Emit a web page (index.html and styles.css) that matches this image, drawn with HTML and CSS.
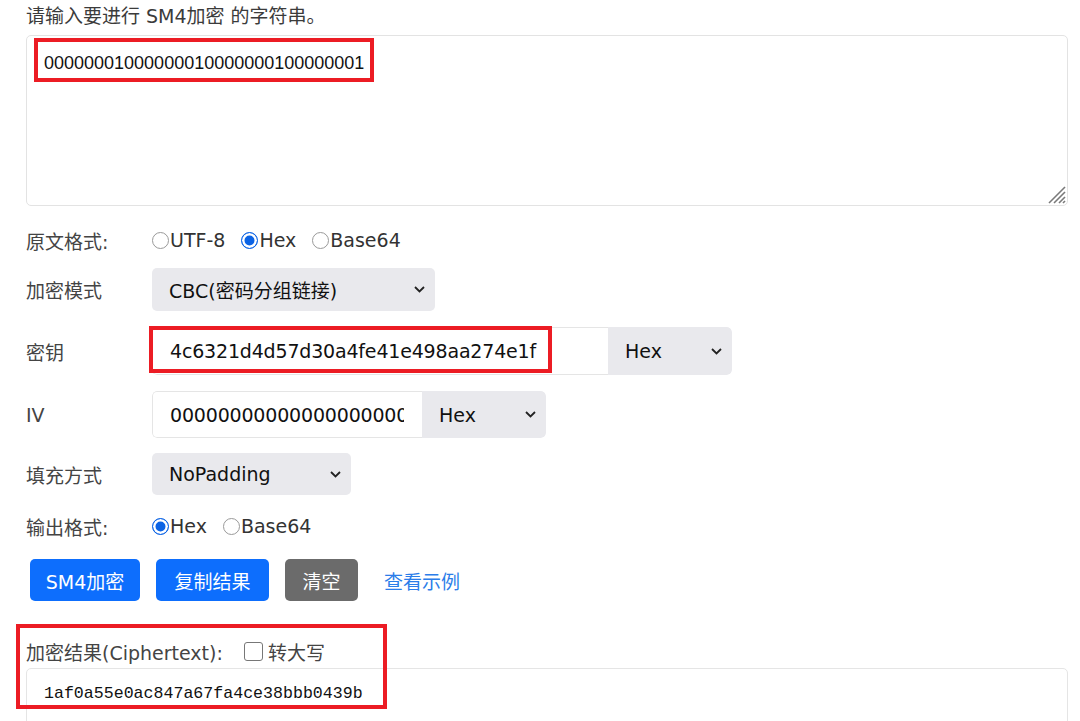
FILE: index.html
```html
<!DOCTYPE html>
<html lang="zh">
<head>
<meta charset="utf-8">
<link rel="stylesheet" href="styles.css">
</head>
<body>
<div class="page">
  <div class="title">请输入要进行 SM4加密 的字符串。</div>
  <div class="textbox">
    <span class="tb-text">00000001000000010000000100000001</span>
    <svg class="grip" width="20" height="20" viewBox="0 0 20 20"><g stroke="#7a7a7a" stroke-width="1.6"><line x1="19" y1="3" x2="3" y2="19"/><line x1="19" y1="8" x2="8" y2="19"/><line x1="19" y1="13" x2="13" y2="19"/><line x1="19" y1="17" x2="17" y2="19"/></g></svg>
  </div>

  <div class="row r-radio1">
    <span class="label">原文格式:</span>
    <label class="opt"><span class="radio"></span>UTF-8</label>
    <label class="opt"><span class="radio on"></span>Hex</label>
    <label class="opt"><span class="radio"></span>Base64</label>
  </div>

  <div class="row r-mode">
    <span class="label">加密模式</span>
    <div class="select sel-mode"><span>CBC(密码分组链接)</span><svg class="chev" width="11" height="7" viewBox="0 0 11 7"><polyline points="1,1 5.5,5.5 10,1" fill="none" stroke="#222" stroke-width="1.8"/></svg></div>
  </div>

  <div class="row r-key">
    <span class="label">密钥</span>
    <div class="group g-key">
      <div class="input in-key"><span>4c6321d4d57d30a4fe41e498aa274e1f</span></div>
      <div class="select sel-addon"><span>Hex</span><svg class="chev" width="11" height="7" viewBox="0 0 11 7"><polyline points="1,1 5.5,5.5 10,1" fill="none" stroke="#222" stroke-width="1.8"/></svg></div>
    </div>
  </div>

  <div class="row r-iv">
    <span class="label">IV</span>
    <div class="group g-iv">
      <input class="input in-iv" type="text" value="00000000000000000000000000000000">
      <div class="select sel-addon"><span>Hex</span><svg class="chev" width="11" height="7" viewBox="0 0 11 7"><polyline points="1,1 5.5,5.5 10,1" fill="none" stroke="#222" stroke-width="1.8"/></svg></div>
    </div>
  </div>

  <div class="row r-pad">
    <span class="label">填充方式</span>
    <div class="select sel-pad"><span>NoPadding</span><svg class="chev" width="11" height="7" viewBox="0 0 11 7"><polyline points="1,1 5.5,5.5 10,1" fill="none" stroke="#222" stroke-width="1.8"/></svg></div>
  </div>

  <div class="row r-radio2">
    <span class="label">输出格式:</span>
    <label class="opt"><span class="radio on"></span>Hex</label>
    <label class="opt"><span class="radio"></span>Base64</label>
  </div>

  <div class="buttons">
    <span class="btn primary b1">SM4加密</span>
    <span class="btn primary b2">复制结果</span>
    <span class="btn gray">清空</span>
    <a class="link">查看示例</a>
  </div>

  <div class="result-label">
    <span>加密结果(Ciphertext):</span>
    <span class="check"></span>
    <span>转大写</span>
  </div>
  <div class="resultbox">
    <span class="res-text">1af0a55e0ac847a67fa4ce38bbb0439b</span>
  </div>

  <div class="mark m1"></div>
  <div class="mark m2"></div>
  <div class="mark m3"></div>
</div>
</body>
</html>
```

FILE: styles.css
```css
html, body {
  margin: 0;
  padding: 0;
  background: #fff;
}
body {
  font-family: "DejaVu Sans", "Noto Sans CJK SC", sans-serif;
  color: #3b3b3b;
  font-size: 19px;
  overflow: hidden;
  height: 721px;
}
.page {
  position: relative;
  padding: 3px 12px 0 26px;
  display: flex;
  flex-direction: column;
}
.title {
  height: 26px;
  line-height: 26px;
  color: #3b3b3b;
}
.textbox {
  position: relative;
  margin-top: 6px;
  height: 171px;
  box-sizing: border-box;
  border: 1px solid #e3e3e3;
  border-radius: 5px;
  padding: 13px 0 0 17px;
}
.tb-text {
  font-family: "Liberation Sans", sans-serif;
  font-size: 18px;
  color: #111;
  line-height: 28px;
}
.grip {
  position: absolute;
  right: 1px;
  bottom: 1px;
}
.row {
  display: flex;
  align-items: center;
}
.label {
  width: 126px;
  flex: none;
  color: #444;
}
.r-radio1 { margin-top: 17px; height: 34px; }
.r-mode { margin-top: 11px; height: 43px; }
.r-key { margin-top: 16px; height: 48px; }
.r-iv { margin-top: 16px; height: 47px; }
.r-pad { margin-top: 15px; height: 42px; }
.r-radio2 { margin-top: 14px; height: 34px; }

.opt {
  display: flex;
  align-items: center;
  margin-right: 16px;
  color: #333;
}
.radio {
  width: 15px;
  height: 15px;
  border: 1.5px solid #9a9a9a;
  border-radius: 50%;
  margin-right: 1px;
  box-sizing: content-box;
}
.radio.on {
  border-color: #0b63e5;
  background: #0b63e5;
  box-shadow: inset 0 0 0 2.5px #fff;
}

.select {
  display: flex;
  align-items: center;
  justify-content: space-between;
  background: #e9e9ed;
  border-radius: 5px;
  box-sizing: border-box;
  height: 100%;
  padding: 0 10px 0 17px;
  color: #111;
}
.chev { flex: none; }
.sel-mode { width: 283px; }
.sel-pad { width: 199px; }

.group {
  display: flex;
  height: 100%;
  border-radius: 5px;
  overflow: hidden;
}
.g-key { width: 580px; }
.g-iv { width: 394px; }
.input {
  box-sizing: border-box;
  height: 100%;
  display: flex;
  align-items: center;
  margin: 0;
  padding: 0 18px 0 17px;
  border: 1px solid #e5e5e5;
  border-right: none;
  border-radius: 5px 0 0 5px;
  background: #fff;
  color: #111;
  flex: none;
  font: inherit;
  letter-spacing: -0.18px;
  outline: none;
  white-space: nowrap;
}
.in-key { width: 456px; }
.in-iv { width: 270px; }
.sel-addon {
  width: 124px;
  flex: none;
  border-radius: 0 5px 5px 0;
}

.buttons {
  margin-top: 16px;
  height: 42px;
  display: flex;
  align-items: center;
  padding-left: 4px;
}
.btn {
  height: 42px;
  box-sizing: border-box;
  display: flex;
  align-items: center;
  justify-content: center;
  border-radius: 5px;
  color: #fff;
  margin-right: 16px;
}
.primary { background: #0d6efd; }
.b1 { width: 110px; }
.b2 { width: 113px; }
.gray { background: #6b6b6b; width: 73px; margin-right: 26px; }
.link { color: #2b7de9; }

.result-label {
  margin-top: 35px;
  height: 30px;
  display: flex;
  align-items: center;
  color: #444;
}
.check {
  width: 17px;
  height: 17px;
  border: 1.3px solid #777;
  border-radius: 3px;
  margin: 0 5px 0 21px;
}
.resultbox {
  margin-top: 2px;
  height: 100px;
  box-sizing: border-box;
  border: 1px solid #e5e5e5;
  border-radius: 5px;
  padding: 11px 0 0 17px;
}
.res-text {
  font-family: "Liberation Mono", monospace;
  font-size: 16.6px;
  color: #111;
  line-height: 24px;
}

.mark {
  position: absolute;
  border: 4px solid #ec1c24;
  box-sizing: border-box;
}
.m1 { left: 34px; top: 38px; width: 340px; height: 44px; }
.m2 { left: 149px; top: 326px; width: 403px; height: 47px; }
.m3 { left: 16px; top: 624px; width: 371px; height: 85px; }
```
